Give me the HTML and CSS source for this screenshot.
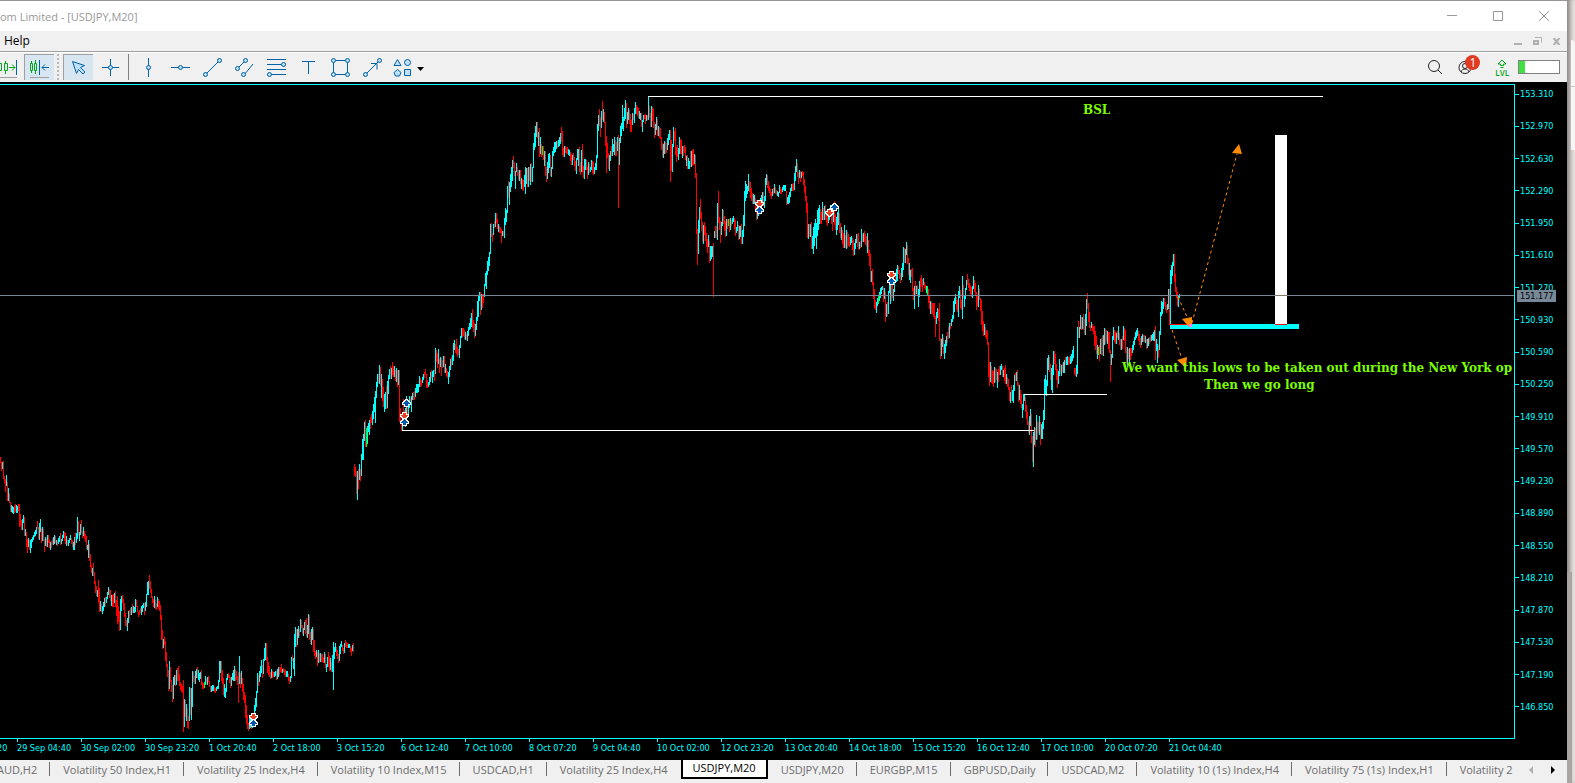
FILE: index.html
```html
<!DOCTYPE html>
<html lang="en">
<head>
    <meta charset="utf-8">
    <title>[USDJPY,M20]</title>
    <meta name="viewport" content="width=device-width, initial-scale=1.0">
    <link rel="stylesheet" href="styles.css">
</head>
<body>
    <div class="window">
        <header class="titlebar">
            <span class="title">om Limited - [USDJPY,M20]</span>
            <div class="window-controls">
                <button aria-label="Minimize"><svg width="12" height="12"><path d="M1 5.5h10"/></svg></button>
                <button aria-label="Maximize"><svg width="12" height="12"><path d="M1.5 1.5h9v9h-9z"/></svg></button>
                <button aria-label="Close"><svg width="12" height="12"><path d="M1 1l10 10M11 1L1 11"/></svg></button>
            </div>
        </header>
        <nav class="menubar">
            <button class="menu-item">Help</button>
            <div class="mdi-controls">
                <button aria-label="Minimize chart"><svg width="9" height="9"><path d="M0 7h8" stroke-width="2"/></svg></button>
                <button aria-label="Restore chart"><svg width="9" height="9"><path d="M1 4h4v3h-4z" stroke-width="2"/><path d="M2 .5h6.500v5"/></svg></button>
                <button aria-label="Close chart"><svg width="9" height="9"><path d="M1 1.500h2M6 1.500h2M1 7.500h2M6 7.500h2"/><path d="M2 1.500l5 6M7 1.500l-5 6" stroke-width="2"/></svg></button>
            </div>
        </nav>
        <div class="toolbar">
            <div class="tools">
                <button class="tool" aria-label="Auto scroll">
                    <svg width="24" height="24"><g class="green"><path d="M4.500 5v15M2.500 8.500h4v7h-4zM10.500 6v3M10.500 16v3M9.500 8.500h3v7h-3zM14 12.500h6M17 9.500l3 3-3 3"/></g><path d="M21.500 5v15"/><path class="grey" d="M2 22.500h20"/></svg>
                </button>
                <button class="tool pressed" aria-label="Chart shift">
                    <svg width="24" height="24"><g class="green"><path d="M4.500 6v2M4.500 16v2M3.500 8.500h2v7h-2zM8.500 5v3M8.500 16v3M7.500 8.500h2v7h-2z"/></g><path d="M12.500 5v15M15 12.500h7M18 9.500l-3 3 3 3"/><path class="grey" d="M3 22.500h19"/></svg>
                </button>
                <span class="handle"></span>
                <button class="tool pressed" aria-label="Cursor">
                    <svg width="24" height="24"><path class="fill" d="M6.500 6.500l12 4-4 2 4.500 4.500-2 2-4.500-4.500-2 4z"/></svg>
                </button>
                <button class="tool" aria-label="Crosshair">
                    <svg width="24" height="24"><path d="M12.500 4v17M4 12.500h17"/><circle class="fill" cx="12.500" cy="12.500" r="2"/></svg>
                </button>
                <span class="divider"></span>
                <button class="tool" aria-label="Vertical line">
                    <svg width="24" height="24"><path d="M12.500 3v19"/><circle class="fill" cx="12.500" cy="12.500" r="2"/></svg>
                </button>
                <button class="tool" aria-label="Horizontal line">
                    <svg width="24" height="24"><path d="M3 12.500h19"/><circle class="fill" cx="12.500" cy="12.500" r="2"/></svg>
                </button>
                <button class="tool" aria-label="Trendline">
                    <svg width="24" height="24"><path d="M5 20L20 5"/><circle class="fill" cx="5.500" cy="19.500" r="2"/><circle class="fill" cx="19.500" cy="5.500" r="2"/></svg>
                </button>
                <button class="tool" aria-label="Equidistant channel">
                    <svg width="24" height="24"><path d="M5 14l9-9M12 20L21 9"/><circle class="fill" cx="5.500" cy="13.500" r="2"/><circle class="fill" cx="13.500" cy="5.500" r="2"/><circle class="fill" cx="11.500" cy="19.500" r="2"/></svg>
                </button>
                <button class="tool" aria-label="Fibonacci retracement">
                    <svg width="24" height="24"><path d="M3 4.500h19M3 9.500h19M3 14.500h19M3 19.500h19"/><circle class="fill" cx="19.500" cy="9.500" r="2"/><circle class="fill" cx="5.500" cy="19.500" r="2"/></svg>
                </button>
                <button class="tool" aria-label="Text">
                    <svg width="24" height="24"><path d="M6 6.500h13M12.500 6v13"/></svg>
                </button>
                <button class="tool" aria-label="Rectangle">
                    <svg width="24" height="24"><path d="M5.500 5.500h14v14h-14z"/><circle class="fill" cx="5.500" cy="5.500" r="2"/><circle class="fill" cx="19.500" cy="5.500" r="2"/><circle class="fill" cx="5.500" cy="19.500" r="2"/><circle class="fill" cx="19.500" cy="19.500" r="2"/></svg>
                </button>
                <button class="tool" aria-label="Arrow">
                    <svg width="24" height="24"><path d="M5 20L18 7M11 8.500h6v6"/><circle class="fill" cx="5.500" cy="19.500" r="2"/><circle class="fill" cx="19.500" cy="5.500" r="2"/></svg>
                </button>
                <button class="tool tool-wide" aria-label="Shapes">
                    <svg width="32" height="24"><path class="fill" d="M3 10.500L6.500 4.500l3.500 6z"/><circle class="fill" cx="16.500" cy="7.500" r="3"/><path class="fill" d="M3 17.500l3.500-3 3.500 3-1.500 3.500h-4zM13.500 14.500h6v6h-6z"/><path class="caret" d="M26 12h7l-3.500 4z"/></svg>
                </button>
            </div>
            <div class="status">
                <button class="tool" aria-label="Search">
                    <svg width="24" height="24" class="dark"><circle cx="11" cy="11" r="5.500"/><path d="M15 15l4 4"/></svg>
                </button>
                <button class="tool account" aria-label="Account">
                    <svg width="24" height="24" class="dark"><circle cx="12" cy="12.500" r="6"/><circle cx="12" cy="11" r="2.500"/><path d="M8 17c1-4 7-4 8 0"/></svg>
                    <span class="badge">1</span>
                </button>
                <button class="level" aria-label="Level">
                    <svg width="12" height="10"><path class="green" d="M6 1L2 5h2.500v1.500h3V5H10zM4.500 8.500h3"/></svg>
                    <span>LVL</span>
                </button>
                <progress class="connection" value="14" max="100" aria-label="Connection"></progress>
            </div>
        </div>

        <main class="chart">
            <div class="plot">
                <svg class="canvas" width="100%" height="100%">
                    <g shape-rendering="crispEdges">
                        <path class="bars-up" id="up"/>
                        <path class="bars-down" id="down"/>
                        <path class="bars-doji" id="doji"/>
                        <path class="level-line" d="M648 11.500h675M402 345.500h632M1024 309.500h83"/>
                        <rect class="zone" x="1170" y="239" width="129" height="5"/>
                        <path class="bars-down" d="M1170 239.500h21"/>
                        <rect class="target" x="1275" y="50" width="12" height="189"/>
                        <path class="bars-down" d="M1275 239.500h12"/>
                        <path class="price-line" d="M0 210.500h4000"/>
                        <path class="price-line-over" d="M1275 210.500h12"/>
                    </g>
                    <g class="arrows">
                        <path d="M1178 212l10 22M1192 238L1237 69M1172 245l9 26"/>
                        <path class="head" d="M1182 234l10-2v10h-3zM1239 59l-7 9 10 1zM1177 275l10-3-1 11z"/>
                    </g>
                    <rect class="overlap" x="1189" y="239" width="3" height="3"/>
                    <g id="trades" shape-rendering="crispEdges"></g>
                </svg>
                <span class="note note-bsl">BSL</span>
                <span class="note note-lows">We want this lows to be taken out during the New York op</span>
                <span class="note note-long">Then we go long</span>
            </div>
            <ol class="prices">
                <li>153.310</li>
                <li>152.970</li>
                <li>152.630</li>
                <li>152.290</li>
                <li>151.950</li>
                <li>151.610</li>
                <li>151.270</li>
                <li>150.930</li>
                <li>150.590</li>
                <li>150.250</li>
                <li>149.910</li>
                <li>149.570</li>
                <li>149.230</li>
                <li>148.890</li>
                <li>148.550</li>
                <li>148.210</li>
                <li>147.870</li>
                <li>147.530</li>
                <li>147.190</li>
                <li>146.850</li>
            </ol>
            <span class="bid">151.177</span>
            <ol class="times">
                <li class="cut">20</li>
                <li>29 Sep 04:40</li>
                <li>30 Sep 02:00</li>
                <li>30 Sep 23:20</li>
                <li>1 Oct 20:40</li>
                <li>2 Oct 18:00</li>
                <li>3 Oct 15:20</li>
                <li>6 Oct 12:40</li>
                <li>7 Oct 10:00</li>
                <li>8 Oct 07:20</li>
                <li>9 Oct 04:40</li>
                <li>10 Oct 02:00</li>
                <li>12 Oct 23:20</li>
                <li>13 Oct 20:40</li>
                <li>14 Oct 18:00</li>
                <li>15 Oct 15:20</li>
                <li>16 Oct 12:40</li>
                <li>17 Oct 10:00</li>
                <li>20 Oct 07:20</li>
                <li>21 Oct 04:40</li>
            </ol>
        </main>

        <footer class="tabs">
            <div class="tab-list">
                <button class="tab first">AUD,H2</button>
                <button class="tab">Volatility 50 Index,H1</button>
                <button class="tab">Volatility 25 Index,H4</button>
                <button class="tab">Volatility 10 Index,M15</button>
                <button class="tab">USDCAD,H1</button>
                <button class="tab last">Volatility 25 Index,H4</button>
                <button class="tab active">USDJPY,M20</button>
                <button class="tab">USDJPY,M20</button>
                <button class="tab">EURGBP,M15</button>
                <button class="tab">GBPUSD,Daily</button>
                <button class="tab">USDCAD,M2</button>
                <button class="tab">Volatility 10 (1s) Index,H4</button>
                <button class="tab">Volatility 75 (1s) Index,H1</button>
                <button class="tab last">Volatility 2</button>
            </div>
            <div class="tab-scroll">
                <button aria-label="Scroll left" disabled><svg width="5" height="8"><path d="M4 0v8L0 4z"/></svg></button>
                <button aria-label="Scroll right"><svg width="5" height="8"><path d="M1 0v8l4-4z"/></svg></button>
            </div>
        </footer>
    </div>
    <div class="backdrop">
        <span class="backdrop-top"></span>
        <span class="backdrop-tab"></span>
        <span class="backdrop-page"></span>
        <span class="backdrop-thumb"></span>
    </div>
    <script src="chart.js"></script>
</body>
</html>
```
FILE: styles.css
```css
html,body{
    margin: 0;
    padding: 0;
    height: 100%;
}
body{
    display: flex;
    overflow: hidden;
    font-family: "Open Sans", "Noto Sans", sans-serif;
    font-size: 12px;
    background: #e4dfdb;
}
button{
    margin: 0;
    padding: 0;
    border: 0;
    background: none;
    font: inherit;
    color: inherit;
}
svg{
    display: block;
    fill: none;
    stroke: #0063a8;
}
.window{
    flex: 1;
    min-width: 0;
    display: flex;
    flex-direction: column;
    background: #f0f0f0;
}

/* title and menu */
.titlebar{
    display: flex;
    justify-content: space-between;
    align-items: center;
    height: 30px;
    border-top: 1px solid #999494;
    background: #fff;
    color: #999;
}
.title{
    font-size: 11px;
    white-space: nowrap;
}
.window-controls{
    display: flex;
    gap: 34px;
    padding-right: 17px;
}
.window-controls svg{
    stroke: #999;
}
.menubar{
    display: flex;
    justify-content: space-between;
    align-items: center;
    height: 20px;
    border-bottom: 1px solid #a0a0a0;
}
.menu-item{
    padding: 0 0 2px 4px;
    color: #000;
}
.mdi-controls{
    display: flex;
    gap: 10px;
    padding-right: 6px;
}
.mdi-controls svg{
    stroke: #b0b0b0;
}

/* toolbar */
.toolbar{
    display: flex;
    justify-content: space-between;
    height: 28px;
    padding-bottom: 1px;
    border-top: 1px solid #fff;
    overflow: hidden;
}
.tools{
    display: flex;
    align-items: center;
    gap: 2px;
    margin-left: -8px;
}
.tool{
    display: flex;
    justify-content: center;
    align-items: center;
    width: 30px;
    height: 26px;
}
.tool-wide{
    width: 36px;
}
.tool-wide svg{
    overflow: visible;
}
.pressed{
    background: #d8e6f2;
    box-shadow: inset 1px 1px #a0a0a0;
}
.fill{
    fill: #bfe0fa;
}
.green{
    stroke: #00a81c;
}
.grey{
    stroke: #a0a0a0;
}
.caret{
    fill: #000;
    stroke: none;
}
.dark{
    stroke: #222;
}
.handle{
    width: 5px;
    height: 26px;
    background: repeating-linear-gradient(#b8b8b8 0 2px, transparent 2px 4px) 1px 0 / 2px 100% no-repeat;
}
.divider{
    width: 1px;
    height: 26px;
    margin: 0 2px 0 1px;
    background: #808080;
}
.status{
    display: flex;
    align-items: center;
    padding-right: 7px;
}
.account{
    position: relative;
    margin-right: 15px;
}
.badge{
    position: absolute;
    top: 1px;
    right: 0;
    width: 15px;
    height: 15px;
    border-radius: 50%;
    background: #e03a20;
    color: #fff;
    line-height: 15px;
    text-align: center;
}
.level{
    display: flex;
    flex-direction: column;
    align-items: center;
    margin-right: 9px;
    color: #00a81c;
    font-size: 8px;
    font-weight: 600;
    line-height: 7px;
}
.connection{
    appearance: none;
    box-sizing: border-box;
    width: 42px;
    height: 14px;
    border: 1px solid #808080;
    background: #fff;
}
.connection::-webkit-progress-bar{
    background: #fff;
}
.connection::-webkit-progress-value{
    background: #40e040;
}

/* chart */
.chart{
    position: relative;
    flex: 1;
    min-height: 0;
    display: grid;
    grid-template-columns: 1fr 52px;
    grid-template-rows: 1fr 21px;
    padding-top: 2px;
    background: #000;
    color: #0ff;
    font-family: "DejaVu Sans Condensed", "DejaVu Sans", sans-serif;
    font-size: 9px;
}
.plot{
    position: relative;
    overflow: hidden;
    border: solid #0ff;
    border-width: 1px 1px 1px 0;
}
.bars-up{
    stroke: #0ff;
}
.bars-down{
    stroke: #f00;
}
.bars-doji{
    stroke: #0f0;
}
.level-line{
    stroke: #fff;
}
.zone{
    fill: #0ff;
    stroke: none;
}
.target{
    fill: #fff;
    stroke: none;
}
.overlap{
    fill: #f7f;
    stroke: none;
}
.price-line{
    stroke: #778899;
}
.price-line-over{
    stroke: #887766;
}
.arrows{
    stroke: #ff8c00;
    stroke-dasharray: 3 3;
}
.head{
    fill: #ff8c00;
    stroke: none;
}
.trade{
    stroke: #fff;
    stroke-width: 2;
    paint-order: stroke;
}
.trade-buy{
    fill: #0058b0;
}
.trade-sell{
    fill: #e84020;
}
.note{
    position: absolute;
    color: #7cfc00;
    font-family: "DejaVu Serif", serif;
    font-size: 12px;
    font-weight: bold;
    line-height: 16px;
    white-space: nowrap;
}
.note-bsl{
    left: 1083px;
    top: 17px;
}
.note-lows{
    left: 1122px;
    top: 275px;
}
.note-long{
    left: 1204px;
    top: 292px;
}
.prices,.times{
    margin: 0;
    padding: 0;
    list-style: none;
}
.prices{
    display: flex;
    flex-direction: column;
    justify-content: space-between;
    padding: 4px 0 26px;
}
.prices li{
    display: flex;
    align-items: center;
    gap: 1px;
    height: 12px;
    line-height: 12px;
}
.prices li::before{
    content: "";
    width: 4px;
    height: 1px;
    background: #0ff;
}
.bid{
    position: absolute;
    top: 208px;
    right: 11px;
    width: 36px;
    padding-left: 3px;
    background: #778899;
    color: #000;
    line-height: 12px;
}
.times{
    grid-column: 1 / 3;
    display: flex;
    overflow: hidden;
}
.times li{
    flex: 0 0 64px;
    height: 18px;
    line-height: 18px;
    white-space: nowrap;
    background: linear-gradient(#0ff, #0ff) 0 0 / 1px 3px no-repeat;
}
.times .cut{
    flex-basis: 17px;
    text-indent: -3px;
    background: none;
}

/* chart tabs */
.tabs{
    display: flex;
    justify-content: space-between;
    height: 23px;
    color: #6d6d6d;
    font-size: 11px;
}
.tab-list{
    display: flex;
    min-width: 0;
}
.tab{
    position: relative;
    padding: 0 13px 4px;
    white-space: nowrap;
}
.tab::after{
    content: "";
    position: absolute;
    top: 2px;
    right: 0;
    width: 1px;
    height: 14px;
    background: #6d6d6d;
}
.first{
    margin-left: -3px;
    padding-left: 0;
}
.last::after,.active::after{
    display: none;
}
.active{
    height: 20px;
    margin-top: -1px;
    padding: 0 10px 2px;
    border: 1px solid #000;
    border-width: 1px 2px 2px;
    box-sizing: border-box;
    background: #fff;
    color: #000;
}
.tab-scroll{
    display: flex;
    gap: 16px;
    padding: 0 12px 3px 0;
}
.tab-scroll svg{
    fill: #000;
    stroke: none;
}
.tab-scroll button:disabled svg{
    fill: #b0b0b0;
}

/* strip of the page behind the window */
.backdrop{
    display: flex;
    flex-direction: column;
    width: 8px;
    box-shadow: inset 5px 0 4px -2px #8a8585;
}
.backdrop-top{
    flex: 0 0 40px;
}
.backdrop-tab{
    flex: 0 0 110px;
    margin-left: 4px;
    border-top-right-radius: 5px;
    background: linear-gradient(#f6f6f6 46px, #c8c8c8 46px 47px, #f6f6f6 47px);
}
.backdrop-page{
    flex: 1;
}
.backdrop-thumb{
    flex: 0 0 211px;
    width: 5px;
    background: #aaa5a2;
}
```
FILE: chart.js
```js
// M20 bars: colour, x, high, low (c = up, r = down, g = doji)
var bars =
    'r0,457,463 r1,462,471 c2,462,469 r3,461,479 r4,476,483 r5,479,492 c6,475,486 r7,482,501 c8,488,501 r9,493,503 ' +
    'r10,502,512 c11,505,512 c13,507,514 r15,504,512 c17,506,513 r18,504,511 r19,504,527 r20,514,526 r21,520,530 c22,519,530 c23,515,523 r24,517,536 ' +
    'c25,529,536 r26,532,547 r27,539,553 c28,538,547 r29,540,550 c30,540,553 c32,537,542 c34,532,537 c36,527,534 r37,521,529 r38,527,539 ' +
    'c39,523,540 c40,519,532 r41,528,543 c42,527,541 r43,529,541 r44,539,552 c45,537,546 r46,538,547 c47,535,547 r48,535,543 r49,540,548 c50,542,550 r52,539,545 ' +
    'c54,535,544 r55,536,543 c56,540,545 r57,540,546 c59,536,542 r60,533,545 c61,539,544 c63,531,538 r65,533,544 c66,536,546 r67,540,545 c68,540,546 c70,535,540 ' +
    'r72,540,547 c73,542,550 c74,537,550 r75,533,545 c76,533,543 c77,517,539 r78,521,536 c79,532,541 c80,524,535 r81,520,533 r82,531,538 c83,527,536 ' +
    'r85,534,542 r86,536,549 c87,545,550 c88,540,558 r89,544,561 r90,554,567 r91,565,573 c92,568,576 r93,563,576 r94,572,584 r95,581,593 r96,586,596 c97,590,597 ' +
    'r98,580,603 r99,588,612 c100,601,611 r101,604,612 c102,606,614 c104,598,607 r105,597,606 c106,597,603 c108,587,595 r109,589,598 r110,590,601 c111,595,606 r113,594,607 ' +
    'c114,593,603 r115,591,607 r116,600,616 r117,596,624 r118,606,622 r119,611,631 c120,599,630 c121,596,611 r122,595,603 r124,603,617 r125,613,626 r126,620,627 ' +
    'c127,618,631 c128,611,623 r130,608,615 c131,607,615 r132,604,613 c134,607,613 c135,599,612 r136,600,607 r138,612,617 r140,608,613 c141,606,615 c143,603,608 ' +
    'r144,603,615 c145,602,611 c146,594,607 c147,582,595 c148,581,595 r149,575,589 r150,581,593 r152,596,603 r153,599,607 c154,596,608 r156,603,610 c157,597,607 r159,601,611 ' +
    'r160,605,620 r161,615,640 r162,630,649 c163,639,648 r164,637,645 r165,641,661 r166,652,667 r167,664,677 r168,670,691 c169,661,689 r170,667,682 r171,680,692 ' +
    'r172,685,702 c173,677,699 c174,675,685 r175,675,686 c176,670,685 r177,668,681 r178,666,681 r180,682,690 r182,686,693 r183,680,732 c184,699,727 r185,700,717 ' +
    'c186,704,721 r187,708,728 r188,716,729 c189,687,721 r190,688,715 c191,688,720 c192,671,707 r193,672,682 r194,676,684 c195,671,684 c196,669,678 r197,667,678 c199,673,682 ' +
    'c200,672,679 r201,670,685 r202,682,689 r203,683,689 g204,682,688 c205,676,685 r206,678,684 c207,677,685 r208,676,682 r210,686,692 c213,685,691 r215,688,693 c217,686,689 c218,680,689 c219,661,682 ' +
    'c220,661,673 r221,661,681 r222,670,684 r223,678,695 c224,684,697 c225,688,698 c226,678,692 c227,674,680 r228,673,678 r230,677,688 c231,677,686 c232,673,680 c234,666,681 ' +
    'r236,671,680 r237,676,685 r238,672,703 c239,656,684 r240,673,688 c241,671,684 r242,678,692 r243,684,700 r244,692,703 r245,695,718 r247,715,729 r248,723,731 ' +
    'c249,718,729 c250,715,728 r251,720,729 c252,720,728 c254,705,715 c256,691,707 c257,673,693 r258,675,686 c260,666,677 c261,660,673 r262,665,678 ' +
    'c263,659,674 c264,648,661 c265,643,660 r266,643,661 r267,657,673 r269,666,677 r270,672,679 c271,669,678 r273,672,677 c275,671,676 r276,671,680 c278,667,677 ' +
    'r280,667,672 r281,664,673 c282,669,673 r283,668,672 r285,670,677 c287,671,677 r289,677,684 c290,676,682 c291,657,678 r292,655,661 c293,658,669 c294,634,676 c295,627,647 ' +
    'r296,629,647 c297,629,645 c298,626,638 r299,629,636 c300,619,632 r301,620,628 r302,625,634 c303,628,636 c304,622,630 r306,618,637 c307,625,638 c308,614,634 r309,615,640 ' +
    'r310,632,644 c311,629,645 c312,627,640 r313,629,652 r315,651,659 c316,650,657 r317,652,666 c318,650,663 r319,653,662 c320,653,662 r322,654,662 r323,657,663 c324,652,663 r325,654,668 ' +
    'c326,664,672 c327,657,667 r328,652,667 r329,656,671 c330,658,670 r331,662,672 c332,655,672 c333,642,690 c334,647,659 c335,643,652 r337,650,659 r338,654,663 c339,646,661 ' +
    'c341,641,647 r343,648,654 c344,643,653 r345,640,647 r347,643,648 c349,644,648 r351,648,656 c352,645,651 r353,643,652 ' +
    'r354,464,476 r355,467,477 r356,471,494 c357,471,500 r358,469,489 c359,464,480 r360,469,481 c361,454,476 c362,439,460 c363,434,460 c364,422,441 r365,420,447 g366,428,447 ' +
    'c367,426,444 c368,423,432 c369,420,435 r371,414,423 c372,411,425 c374,397,412 c375,391,423 c376,382,398 c377,374,387 r378,374,383 c379,365,384 r380,367,386 ' +
    'c381,374,398 r382,379,401 r383,387,407 c384,394,412 c385,392,409 r386,386,409 c387,381,408 c389,369,379 r390,366,379 c391,368,379 r392,362,375 r393,366,377 c394,366,377 r395,370,381 ' +
    'c396,368,382 r397,370,387 c398,370,385 r399,370,422 r400,408,422 r401,420,431 c402,415,431 r403,399,420 r404,410,424 c405,408,427 c406,396,413 r407,405,415 c408,403,415 c409,396,408 r410,398,405 ' +
    'c411,396,412 c412,393,400 r414,391,400 c416,384,393 c418,384,392 c419,376,387 r421,380,386 c423,374,380 r425,369,375 r426,374,388 r427,380,388 c428,382,387 c430,372,382 r431,370,378 ' +
    'c432,371,383 c433,370,377 r434,369,381 c435,348,374 r436,350,362 r437,353,368 c438,349,364 r439,359,373 c440,357,367 r441,358,376 r442,360,368 c443,356,367 r444,356,373 c445,364,373 r447,371,378 ' +
    'c448,372,384 c450,359,370 r451,357,366 c452,355,365 c453,343,361 c454,340,350 r455,344,353 r456,339,354 r457,347,357 r458,349,355 c459,345,358 c460,336,348 c461,328,338 r463,328,336 r464,330,339 c465,332,340 r466,334,340 ' +
    'c467,331,341 c469,323,330 c471,313,327 r472,309,328 r473,320,332 r474,323,338 c475,324,336 c476,317,330 c477,301,321 c478,295,317 c479,292,301 r480,292,315 c481,294,310 r482,294,308 ' +
    'r483,294,303 c484,284,297 c485,273,286 c486,271,289 c487,261,275 c489,252,266 c490,224,254 r491,223,237 r492,233,242 c493,224,235 r494,221,228 c495,213,227 r496,213,223 r497,219,229 c498,224,232 r500,227,233 ' +
    'r501,229,243 c502,231,236 r503,231,236 c504,218,238 c505,208,225 c506,210,222 c507,186,213 r508,181,198 c509,182,205 c510,174,192 c512,160,181 r513,156,168 r514,162,176 c515,171,189 c516,163,172 ' +
    'r518,170,180 c519,170,181 r520,170,184 c521,178,189 r523,180,191 c524,175,187 c525,167,194 c526,168,184 r527,168,187 c528,167,187 r529,167,181 c530,164,185 r531,163,182 c532,167,182 c533,143,168 c534,133,150 c535,126,147 ' +
    'c536,122,137 r537,122,138 c538,132,146 r539,128,157 c540,137,154 r541,144,157 g542,146,155 r543,146,160 c544,151,166 r545,151,176 r546,167,182 c547,162,179 c548,154,173 c549,153,168 ' +
    'r550,155,176 c551,167,177 c552,151,169 c553,147,156 c554,142,153 c555,142,152 c556,141,149 r557,141,148 c558,140,147 c560,133,144 r561,127,142 r562,131,155 r563,148,157 c564,146,157 r565,146,153 r567,147,154 c569,150,156 r571,154,165 c572,155,165 ' +
    'r573,153,160 r575,161,171 c576,158,174 c577,149,160 c578,149,166 r579,147,172 r580,162,175 c581,150,172 r582,144,172 r583,166,178 c584,159,179 c585,159,170 r586,160,170 r587,167,179 c588,162,175 r589,164,173 ' +
    'c590,167,172 c591,160,170 r593,162,175 c594,167,174 c595,163,170 c596,155,170 c597,124,158 c598,115,131 r599,109,126 r600,117,137 c601,111,128 r602,101,120 c603,109,122 r604,112,123 ' +
    'r605,122,146 r606,136,173 r607,143,158 r608,153,169 c609,155,171 c610,151,161 r611,146,156 c612,139,156 c613,144,152 c614,137,155 r616,142,156 c617,137,151 r618,135,208 c619,138,165 c620,126,143 c621,123,136 ' +
    'c622,105,129 c623,117,131 c624,108,121 c625,100,119 r626,103,128 c627,112,124 c628,108,120 r629,110,124 r630,114,132 r631,120,132 c632,113,125 r633,114,120 c634,108,123 c635,102,114 r636,105,114 r638,108,118 c640,113,120 ' +
    'r641,113,127 c642,120,132 c643,115,122 r644,115,119 r645,114,124 c646,115,121 r647,115,120 c648,96,120 r649,106,118 r650,113,127 c651,106,127 r652,107,121 r653,109,128 r654,122,138 c655,124,135 c656,117,130 r657,119,136 ' +
    'c658,126,136 r660,128,139 r661,137,150 r662,143,157 c663,144,158 c664,141,154 r666,143,153 c667,138,150 c669,130,140 r670,130,182 r671,140,171 c672,144,172 c673,127,147 r674,131,141 ' +
    'r675,128,155 r676,147,162 r677,145,157 c678,148,160 c679,137,154 r681,140,154 c682,146,158 r684,145,153 r685,147,160 c686,156,166 r687,155,169 c689,161,169 r690,151,167 c691,151,167 r693,149,165 c694,154,164 ' +
    'r695,155,178 r696,173,234 r697,229,265 c698,220,254 c699,207,233 r700,199,219 r701,212,231 r702,222,242 c703,225,244 r704,222,235 r705,226,241 r707,239,253 c708,235,247 r709,241,263 c710,246,261 ' +
    'c712,246,257 r713,243,297 c714,231,238 r715,226,238 r716,226,238 c717,203,240 r718,191,223 r719,217,230 r720,221,243 c721,222,235 c722,209,226 r723,210,224 r725,221,237 c726,219,236 ' +
    'r727,219,229 g728,219,226 r729,219,232 c730,218,230 r731,220,226 c733,216,222 r735,220,236 c736,227,233 c737,221,231 r738,225,240 c740,226,237 r741,224,244 c742,230,244 c743,215,237 c744,191,226 c745,181,201 c747,186,194 ' +
    'c748,174,191 r749,181,192 r750,182,198 r752,193,204 c754,195,204 r756,200,220 c757,205,219 c760,198,210 c762,192,203 r763,192,206 c764,196,208 c765,178,201 c766,174,185 r767,175,188 r769,186,193 r771,192,199 c772,189,196 r773,188,194 c774,184,193 ' +
    'r776,190,195 c778,192,197 c779,185,193 r781,189,194 c783,185,190 c785,185,191 r786,191,205 c787,197,204 c789,192,203 c791,184,191 r793,183,191 c794,173,190 c796,159,172 r797,163,177 ' +
    'r798,172,184 c799,170,178 r800,171,182 c801,172,178 r802,171,176 r803,172,185 r805,186,201 r806,196,213 r807,203,238 c808,224,239 r809,224,237 c810,224,237 r811,222,249 c812,236,249 c813,227,254 c815,219,238 c816,223,249 c817,210,236 ' +
    'c819,205,224 r821,212,224 c822,202,220 r823,208,220 c824,206,220 r825,205,220 r827,214,226 c830,205,217 r832,213,231 c833,205,222 r834,201,225 r835,214,230 c836,217,235 c838,207,225 r839,213,233 r840,223,238 c841,227,240 ' +
    'r843,233,248 c844,225,248 r845,235,248 c846,230,249 r848,234,246 r849,237,247 c851,236,243 r853,240,256 c854,243,255 c856,234,243 r858,233,250 c859,242,249 r860,241,248 c861,229,247 r862,234,242 c863,233,242 r864,231,242 r866,236,247 ' +
    'c867,233,253 r868,240,256 r869,250,266 r870,254,282 c871,271,282 r872,269,285 r873,282,299 r874,289,308 r875,300,310 c876,302,313 c877,298,306 g878,296,304 c880,288,298 c882,286,290 r883,288,302 ' +
    'c884,288,299 r885,292,322 c886,304,317 r887,302,316 c888,291,314 c889,280,293 c890,284,304 r892,285,298 c893,289,301 c894,280,292 r895,272,282 c897,265,281 r898,266,274 r900,273,283 ' +
    'c902,263,277 c903,247,270 r904,248,263 c905,249,263 c906,242,255 r907,245,264 r908,258,275 c909,263,280 c910,270,283 r911,269,277 r912,268,291 r913,288,300 c914,286,309 r915,281,295 c916,286,294 ' +
    'r917,285,296 c918,289,307 c919,281,297 r921,275,287 r922,279,292 c923,278,285 r925,285,290 c926,286,293 g927,286,295 r928,289,303 r929,296,309 c930,301,314 r932,303,314 r934,303,319 r935,316,337 c936,312,324 ' +
    'c937,308,318 r938,309,321 r939,303,341 r940,338,359 c941,339,356 c942,334,347 r943,338,354 c944,344,359 c946,336,346 r948,327,339 c949,323,338 r950,323,329 c952,315,322 c953,301,319 c955,294,304 r956,297,310 r957,300,312 c958,291,317 ' +
    'c959,286,298 r960,290,308 r961,300,310 c962,276,319 r963,285,298 c964,295,307 c966,280,290 r967,274,285 r969,283,291 r971,287,297 c972,286,298 c973,276,289 r975,283,295 r976,292,310 r977,295,306 c978,285,307 ' +
    'r979,289,300 r980,298,311 r981,300,325 r983,321,336 c984,324,335 r986,330,339 r987,331,345 r988,342,377 r989,362,386 c990,362,382 r992,370,384 r993,371,387 c994,367,383 r996,369,380 c997,372,388 ' +
    'r999,366,375 c1000,366,375 c1001,364,370 r1002,366,377 c1003,370,377 r1005,365,384 c1006,374,384 r1008,379,390 r1009,387,401 c1010,392,403 r1011,385,401 c1012,390,401 c1013,385,403 c1014,375,391 r1015,373,381 c1016,372,381 r1017,370,386 r1018,383,402 ' +
    'c1019,385,400 r1021,394,408 c1022,404,418 c1023,394,410 c1024,394,401 r1025,397,412 r1027,412,425 r1028,421,433 c1029,416,435 c1030,409,426 r1031,414,443 r1032,436,462 c1033,432,467 c1034,427,445 ' +
    'r1035,428,447 c1036,415,440 r1037,421,439 r1038,422,433 c1039,416,435 r1040,422,445 c1041,424,439 c1042,422,439 c1043,410,429 c1044,379,420 c1045,375,394 c1046,380,396 c1047,358,386 c1048,355,370 r1049,357,372 r1050,364,380 ' +
    'c1051,368,390 c1052,365,393 c1053,351,375 r1054,351,364 r1055,354,370 r1056,364,380 r1057,369,388 c1058,371,384 c1059,359,376 r1060,364,374 c1061,365,376 r1062,364,372 c1064,360,373 r1065,357,365 c1067,356,365 r1069,357,364 ' +
    'c1071,354,363 c1073,346,358 r1074,368,374 r1075,368,376 c1076,365,377 c1077,327,374 r1078,321,338 c1079,327,338 c1080,315,329 r1081,317,330 c1082,317,329 r1083,314,330 r1084,319,335 c1085,314,335 ' +
    'c1086,299,326 r1087,293,309 r1088,303,322 r1089,312,328 r1090,325,331 c1091,322,328 r1093,326,334 r1094,326,346 r1096,336,354 c1097,345,359 g1098,347,355 r1099,345,361 c1100,339,354 r1102,336,355 ' +
    'c1103,335,356 c1104,328,345 r1106,330,342 c1107,331,344 r1109,332,353 r1110,350,382 c1111,354,365 c1112,336,358 c1113,327,340 r1115,332,344 c1116,333,344 r1117,331,338 c1118,326,340 r1120,339,350 c1121,339,350 r1122,336,349 c1123,326,340 ' +
    'r1124,328,341 r1125,330,353 r1126,347,364 c1127,347,367 r1128,349,359 c1129,348,364 r1131,348,356 c1133,341,350 c1135,332,340 c1137,328,336 r1139,334,345 r1140,338,348 c1142,334,342 r1144,335,342 c1145,336,343 r1146,339,349 c1148,338,346 ' +
    'r1150,335,342 c1152,334,340 c1154,330,341 r1155,326,360 c1156,339,351 c1157,344,363 r1158,345,358 c1159,331,350 c1160,312,335 c1161,301,316 c1162,302,314 c1163,298,309 r1164,298,306 r1166,305,313 c1167,304,310 c1168,289,309 ' +
    'r1169,289,325 c1170,270,325 c1171,265,284 c1172,262,276 c1173,254,266 r1174,254,282 r1175,274,292 r1176,287,298 r1177,292,306 c1178,295,307 c1179,294,298';

// first row of the plot, in window rows
var TOP = 85;
var paths = {c: '', r: '', g: ''};

function bar(colour, x, high, low) {
    paths[colour] += 'M' + (x + 0.5) + ' ' + (high - TOP) + 'V' + (low - TOP);
}

var last = null;
bars.split(' ').forEach(function (item) {
    var v = item.slice(1).split(',').map(Number);
    var colour = item[0] === 'g' ? 'c' : item[0];
    // columns left out of the list lie between their neighbours
    if (last) {
        for (var x = last[0] + 1; x < v[0]; x++) {
            var t = (x - last[0]) / (v[0] - last[0]);
            bar(colour, x, Math.round(last[1] + (v[1] - last[1]) * t), Math.round(last[2] + (v[2] - last[2]) * t));
        }
    }
    bar(item[0], v[0], v[1], v[2]);
    last = v;
});
document.getElementById('up').setAttribute('d', paths.c);
document.getElementById('down').setAttribute('d', paths.r);
document.getElementById('doji').setAttribute('d', paths.g);

// executed trades: side, x, y
var trades = [
    ['sell', 253, 716], ['buy', 253, 723],
    ['buy', 406, 403], ['sell', 404, 415], ['buy', 404, 422],
    ['sell', 759, 203], ['buy', 759, 210],
    ['buy', 834, 207], ['sell', 829, 212],
    ['sell', 891, 274], ['buy', 891, 281]
];
var shapes = {
    buy: 'M0-3h1v1h1v1h1v1h1v1h-2v2h-3v-2h-2v-1h1v-1h1v-1h1z',
    sell: 'M0 4h1v-1h1v-1h1v-1h1v-1h-2v-2h-3v2h-2v1h1v1h1v1h1z'
};
document.getElementById('trades').innerHTML = trades.map(function (t) {
    return '<path class="trade trade-' + t[0] + '" d="' + shapes[t[0]] + '" transform="translate(' + t[1] + ' ' + (t[2] - TOP) + ')"/>';
}).join('');
```
